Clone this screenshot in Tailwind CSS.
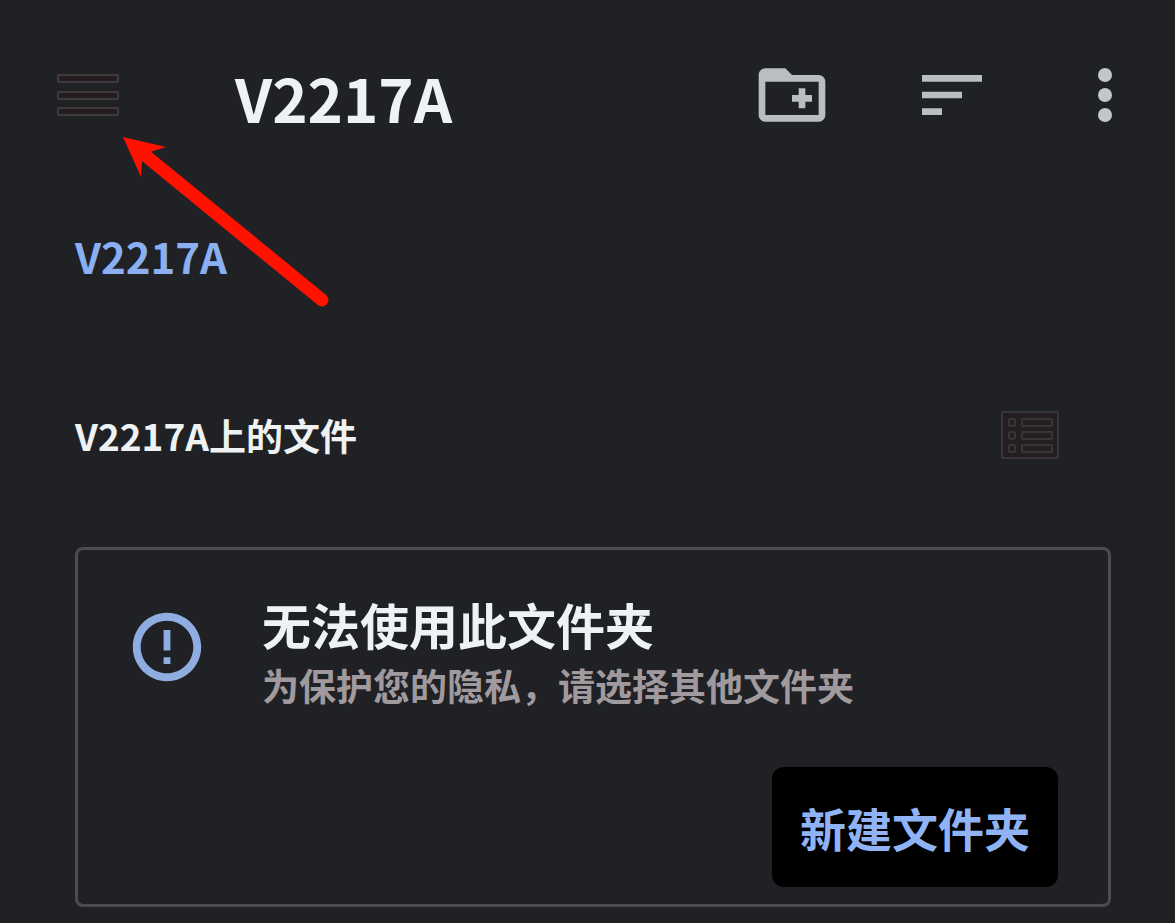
<!DOCTYPE html>
<html lang="zh-CN">

<head>
    <meta charset="UTF-8">
    <meta name="viewport" content="width=device-width, initial-scale=1.0">
    <title>V2217A</title>
    <script src="https://cdn.jsdelivr.net/npm/@tailwindcss/browser@4"></script>
</head>

<body class="relative min-h-screen bg-[#202125] font-['Noto_Sans_CJK_SC',sans-serif] font-bold text-[#eef2f3]">
    <!-- Toolbar -->
    <header class="flex items-start pt-[55px] pl-12 pr-[30px]">
        <button aria-label="菜单" class="size-20 shrink-0">
            <svg class="size-20" viewBox="0 0 80 80" fill="#231d20" stroke="#413a3d" stroke-width="2">
                <rect x="10" y="20" width="60" height="7" rx="1" />
                <rect x="10" y="37" width="60" height="7" rx="1" />
                <rect x="10" y="53" width="60" height="7" rx="1" />
            </svg>
        </button>
        <h1 class="ml-[107px] text-[60px] leading-[84px]">V2217A</h1>
        <div class="ml-auto flex items-center text-[#b9bfc0]">
            <button aria-label="新建文件夹" class="size-20">
                <svg class="size-20" viewBox="0 0 24 24" fill="currentColor">
                    <path d="M20 6h-8l-2-2H4c-1.1 0-2 .9-2 2v12c0 1.1.9 2 2 2h16c1.1 0 2-.9 2-2V8c0-1.1-.9-2-2-2zm0 12H4V8h16v10zm-8-4h2v2h2v-2h2v-2h-2v-2h-2v2h-2z" />
                </svg>
            </button>
            <button aria-label="排序" class="ml-20 size-20">
                <svg class="size-20" viewBox="0 0 24 24" fill="currentColor">
                    <path d="M3 18h6v-2H3v2zM3 6v2h18V6H3zm0 7h12v-2H3v2z" />
                </svg>
            </button>
            <button aria-label="更多选项" class="ml-[73px] size-20">
                <svg class="size-20" viewBox="0 0 24 24" fill="#c3c7ca">
                    <circle cx="12" cy="6" r="2.1" />
                    <circle cx="12" cy="12" r="2.1" />
                    <circle cx="12" cy="18" r="2.1" />
                </svg>
            </button>
        </div>
    </header>

    <main class="pl-[75px] pr-16 pb-4">
        <!-- Breadcrumb -->
        <nav class="mt-[87px] text-[42px] leading-[60px]">
            <a href="#" class="text-[#8ab0f2]">V2217A</a>
        </nav>

        <div class="mt-[119px] flex items-center justify-between pr-[51px]">
            <h2 class="text-[37px] leading-[60px]">V2217A上的文件</h2>
            <button aria-label="列表视图">
                <svg class="h-[50px] w-[60px]" viewBox="0 0 60 50" fill="#231e22" stroke="#393438" stroke-width="2">
                    <rect x="2" y="2" width="56" height="46" rx="1" />
                    <rect x="9" y="9" width="6" height="7" rx="1" />
                    <rect x="9" y="22" width="6" height="7" rx="2" />
                    <rect x="9" y="35" width="6" height="7" rx="1" />
                    <rect x="22" y="9" width="30" height="7" rx="1" />
                    <rect x="22" y="22" width="30" height="7" rx="1" />
                    <rect x="22" y="35" width="30" height="7" rx="1" />
                </svg>
            </button>
        </div>

        <!-- Notice card -->
        <section class="mt-[82px] rounded-lg border-3 border-[#4b4c50] pt-11 pr-[50px] pb-[17px] pl-12">
            <div class="flex">
                <svg class="mt-3 size-[82px] shrink-0" viewBox="0 0 24 24" fill="#8fade0">
                    <path d="M11 15h2v2h-2zm0-8h2v6h-2zm1-5C6.48 2 2 6.48 2 12s4.48 10 10 10 10-4.48 10-10S17.52 2 12 2zm0 17.700c-4.250 0-7.700-3.450-7.700-7.700S7.750 4.300 12 4.300 19.700 7.750 19.700 12 16.250 19.700 12 19.700z" />
                </svg>
                <div class="ml-[54px]">
                    <h3 class="text-[49px] leading-[60px]">无法使用此文件夹</h3>
                    <p class="text-[37px] leading-[62px] text-[#a09a9f]">为保护您的隐私，请选择其他文件夹</p>
                </div>
            </div>
            <div class="mt-[51px] flex justify-end">
                <button class="rounded-xl bg-black px-7 py-[30px] text-[46px] leading-[60px] text-[#8fb3f5]">新建文件夹</button>
            </div>
        </section>
    </main>

    <!-- Arrow pointing at the menu button -->
    <svg class="pointer-events-none absolute top-[130px] left-[115px] h-[185px] w-[220px]" viewBox="115 130 220 185" fill="#ff1200">
        <path d="M123 137l43 10-16 5-8 9-1 16z" />
        <path d="M146 156L322 300" stroke="#ff1200" stroke-width="13" />
        <circle cx="322" cy="300" r="6.500" />
    </svg>
</body>

</html>
